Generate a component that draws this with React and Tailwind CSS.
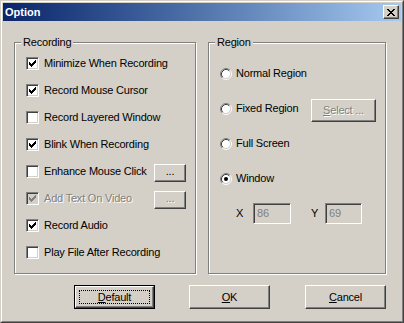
import React from "react";

const font = { fontFamily: '"Liberation Sans", Arial, sans-serif' };

function Check({ disabled }) {
  return (
    <svg width="7" height="7" viewBox="0 0 7 7" shapeRendering="crispEdges">
      <path
        d="M0 2h1v3H0z M1 3h1v3H1z M2 4h1v3H2z M3 3h1v3H3z M4 2h1v3H4z M5 1h1v3H5z M6 0h1v3H6z"
        fill={disabled ? "#808080" : "#000"}
      />
    </svg>
  );
}

function CheckBox({ checked, disabled }) {
  return (
    <div
      className={`w-[13px] h-[13px] shrink-0 flex items-center justify-center border border-t-[#808080] border-l-[#808080] border-b-white border-r-white shadow-[inset_1px_1px_0_#404040,inset_-1px_-1px_0_#d4d0c8] ${
        disabled ? "bg-[#d4d0c8]" : "bg-white"
      }`}
    >
      {checked && <Check disabled={disabled} />}
    </div>
  );
}

function Radio({ checked }) {
  return (
    <svg width="12" height="12" viewBox="0 0 12 12" className="shrink-0">
      <circle cx="6" cy="6" r="4.5" fill="#fff" />
      <path d="M2.11 9.89 A5.5 5.5 0 0 1 9.89 2.11" stroke="#808080" fill="none" />
      <path d="M9.89 2.11 A5.5 5.5 0 0 1 2.11 9.89" stroke="#fff" fill="none" />
      <path d="M2.82 9.18 A4.5 4.5 0 0 1 9.18 2.82" stroke="#404040" fill="none" />
      <path d="M9.18 2.82 A4.5 4.5 0 0 1 2.82 9.18" stroke="#d4d0c8" fill="none" />
      {checked && <circle cx="6" cy="6" r="2" fill="#000" />}
    </svg>
  );
}

const bevel =
  "border border-t-white border-l-white border-b-[#404040] border-r-[#404040] shadow-[inset_-1px_-1px_0_#808080] bg-[#d4d0c8]";

const grayText = "text-[#808080] [text-shadow:1px_1px_0_#fff]";

function CheckRow({ label, checked, disabled, dots }) {
  return (
    <div className="h-[27px] flex items-center">
      <CheckBox checked={checked} disabled={disabled} />
      <span className={`ml-[5px] ${disabled ? grayText : "text-black"}`}>{label}</span>
      {dots && (
        <div
          className={`ml-auto mr-[9px] mt-[3px] w-[32px] h-[18px] flex items-center justify-center ${bevel} ${
            disabled ? grayText : "text-black"
          }`}
        >
          <span className="leading-none pb-[3px]">...</span>
        </div>
      )}
    </div>
  );
}

function RadioRow({ label, checked, children }) {
  return (
    <div className="h-[35px] flex items-center">
      <Radio checked={checked} />
      <span className="ml-[4px]">{label}</span>
      {children}
    </div>
  );
}

function Group({ title, className, children }) {
  return (
    <div
      className={`relative h-[232px] border border-[#808080] shadow-[inset_1px_1px_0_#fff,1px_1px_0_#fff] ${className}`}
    >
      <span className="absolute -top-[8px] left-[6px] px-[2px] bg-[#d4d0c8] leading-[14px]">
        {title}
      </span>
      {children}
    </div>
  );
}

function DlgButton({ children, isDefault }) {
  if (isDefault) {
    return (
      <div className="w-[81px] h-[24px] border border-black">
        <div className={`w-full h-full ${bevel} flex items-center justify-center p-[3px]`}>
          <div className="w-full h-full border border-dotted border-black flex items-center justify-center">
            {children}
          </div>
        </div>
      </div>
    );
  }
  return (
    <div className={`w-[81px] h-[24px] ${bevel} flex items-center justify-center`}>
      {children}
    </div>
  );
}

export default function App() {
  return (
    <div
      style={font}
      className="w-[404px] h-[323px] bg-[#d4d0c8] text-[11px] tracking-[-0.2px] text-black border border-t-[#d4d0c8] border-l-[#d4d0c8] border-b-[#404040] border-r-[#404040] select-none"
    >
      <div className="w-full h-full border border-t-white border-l-white border-b-[#808080] border-r-[#808080] p-[1px] flex flex-col">
        {/* title bar */}
        <div className="h-[18px] shrink-0 flex items-center justify-between pl-[2px] pr-[2px] bg-gradient-to-r from-[#0a246a] to-[#a6caf0]">
          <span className="text-white font-bold text-[11px] tracking-normal">Option</span>
          <div className={`w-[16px] h-[14px] flex items-center justify-center ${bevel}`}>
            <svg width="8" height="7" viewBox="0 0 8 7" shapeRendering="crispEdges">
              <path
                d="M0 0h2v1H0z M6 0h2v1H6z M1 1h2v1H1z M5 1h2v1H5z M2 2h4v1H2z M3 3h2v1H3z M2 4h4v1H2z M1 5h2v1H1z M5 5h2v1H5z M0 6h2v1H0z M6 6h2v1H6z"
                fill="#000"
              />
            </svg>
          </div>
        </div>

        {/* body */}
        <div className="pl-[11px] pt-[21px] flex gap-[12px]">
          <Group title="Recording" className="w-[182px] pl-[11px] pt-[7px]">
            <CheckRow label="Minimize When Recording" checked />
            <CheckRow label="Record Mouse Cursor" checked />
            <CheckRow label="Record Layered Window" />
            <CheckRow label="Blink When Recording" checked />
            <CheckRow label="Enhance Mouse Click" dots />
            <CheckRow label="Add Text On Video" checked disabled dots />
            <CheckRow label="Record Audio" checked />
            <CheckRow label="Play File After Recording" />
          </Group>

          <Group title="Region" className="w-[178px] pl-[11px] pt-[13px]">
            <RadioRow label="Normal Region" />
            <RadioRow label="Fixed Region">
              <div
                className={`ml-auto mr-[9px] mt-[4px] w-[65px] h-[23px] flex items-center justify-center ${bevel} ${grayText}`}
              >
                <span>
                  <u>S</u>elect ...
                </span>
              </div>
            </RadioRow>
            <RadioRow label="Full Screen" />
            <RadioRow label="Window" checked />
            <div className="mt-[7px] h-[21px] flex items-center">
              <span className="ml-[16px] w-[17px]">X</span>
              <div className="w-[38px] h-[21px] border border-t-[#808080] border-l-[#808080] border-b-white border-r-white shadow-[inset_1px_1px_0_#404040,inset_-1px_-1px_0_#d4d0c8] pl-[3px] flex items-center text-[#808080]">
                86
              </div>
              <span className="ml-[20px] w-[14px]">Y</span>
              <div className="w-[37px] h-[21px] border border-t-[#808080] border-l-[#808080] border-b-white border-r-white shadow-[inset_1px_1px_0_#404040,inset_-1px_-1px_0_#d4d0c8] pl-[3px] flex items-center text-[#808080]">
                69
              </div>
            </div>
          </Group>
        </div>

        {/* buttons */}
        <div className="mt-[11px] pl-[71px] flex gap-[34px]">
          <DlgButton isDefault>
            <span>
              <u>D</u>efault
            </span>
          </DlgButton>
          <DlgButton>
            <span>
              <u>O</u>K
            </span>
          </DlgButton>
          <div className="ml-[1px]">
            <DlgButton>
              <span>
                <u>C</u>ancel
              </span>
            </DlgButton>
          </div>
        </div>
      </div>
    </div>
  );
}
